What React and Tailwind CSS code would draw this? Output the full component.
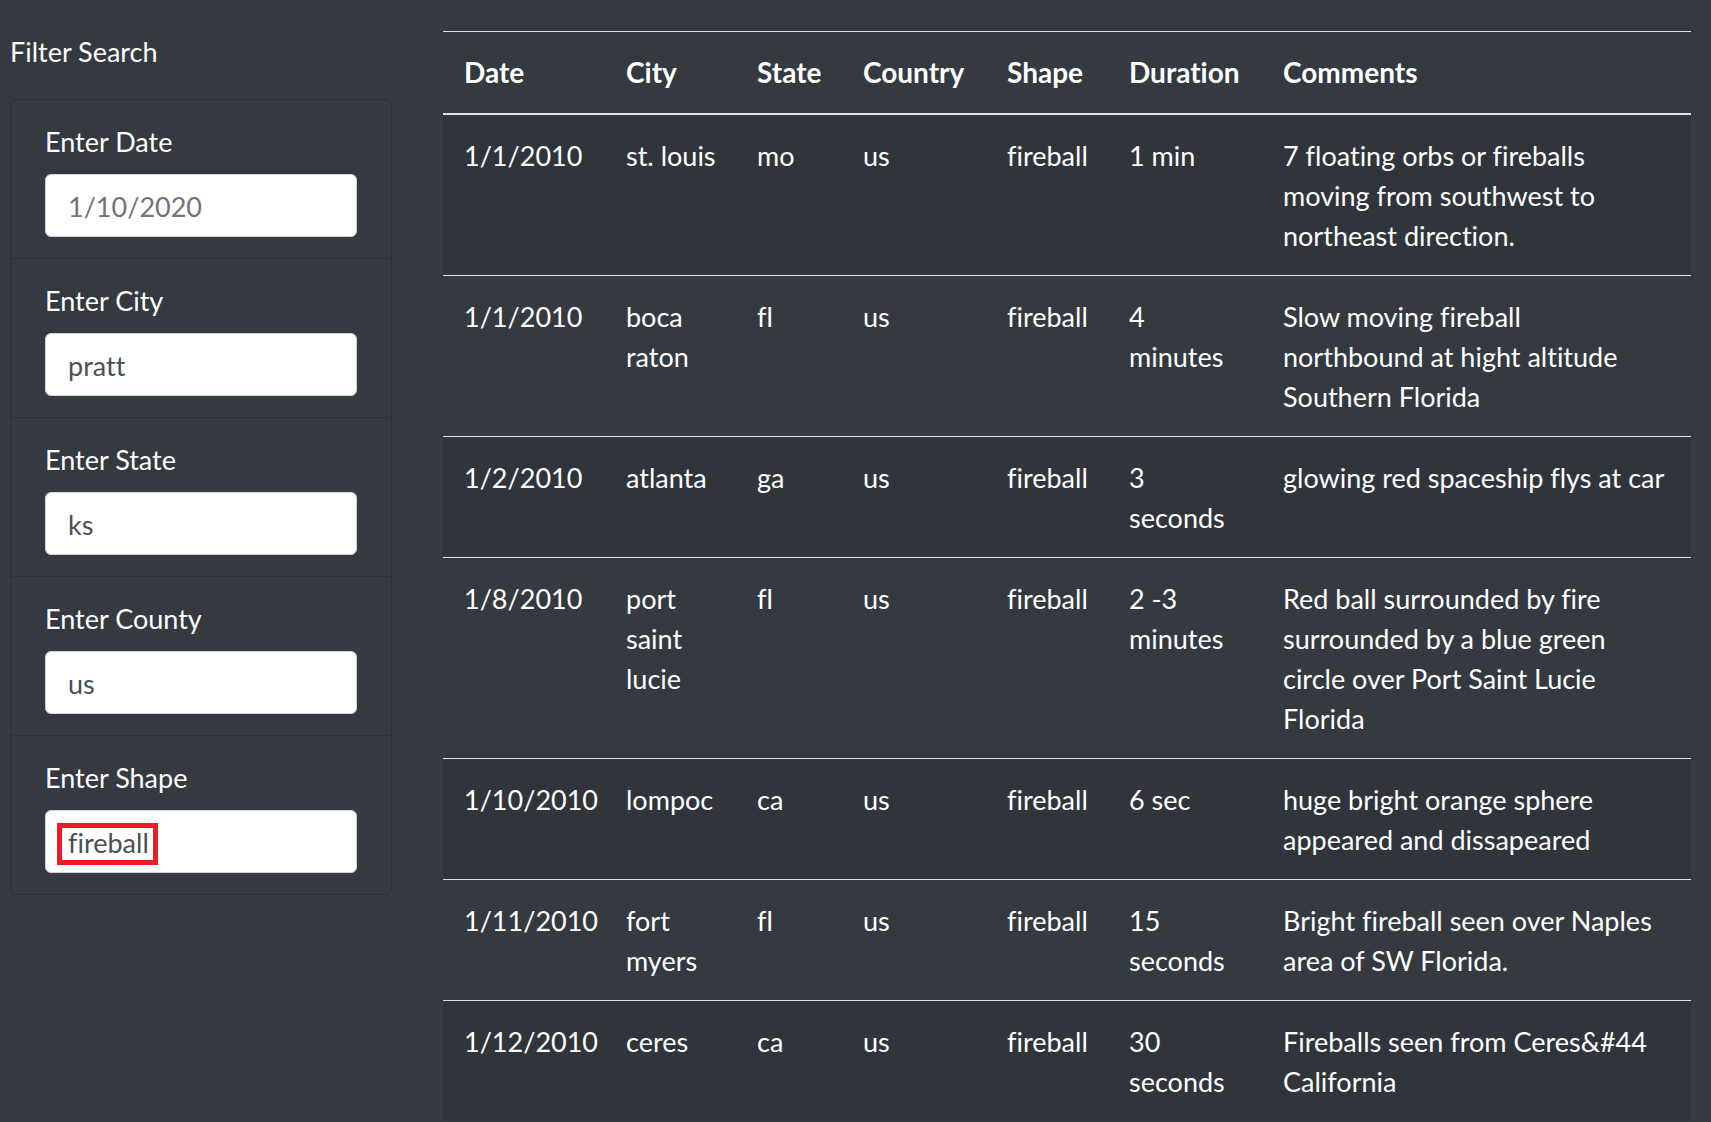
import React from "react";

const fields = [
  { label: "Enter Date", value: "1/10/2020", light: true },
  { label: "Enter City", value: "pratt" },
  { label: "Enter State", value: "ks" },
  { label: "Enter County", value: "us" },
  { label: "Enter Shape", value: "fireball", marked: true },
];

const cols = [
  { name: "Date", w: "w-[162px]" },
  { name: "City", w: "w-[131px]" },
  { name: "State", w: "w-[106px]" },
  { name: "Country", w: "w-[144px]" },
  { name: "Shape", w: "w-[122px]" },
  { name: "Duration", w: "w-[154px]" },
  { name: "Comments", w: "w-[429px]" },
];

const rows = [
  ["1/1/2010", ["st. louis"], ["mo"], ["us"], ["fireball"], ["1 min"], ["7 floating orbs or fireballs", "moving from southwest to", "northeast direction."]],
  ["1/1/2010", ["boca", "raton"], ["fl"], ["us"], ["fireball"], ["4", "minutes"], ["Slow moving fireball", "northbound at hight altitude", "Southern Florida"]],
  ["1/2/2010", ["atlanta"], ["ga"], ["us"], ["fireball"], ["3", "seconds"], ["glowing red spaceship flys at car"]],
  ["1/8/2010", ["port", "saint", "lucie"], ["fl"], ["us"], ["fireball"], ["2 -3", "minutes"], ["Red ball surrounded by fire", "surrounded by a blue green", "circle over Port Saint Lucie", "Florida"]],
  ["1/10/2010", ["lompoc"], ["ca"], ["us"], ["fireball"], ["6 sec"], ["huge bright orange sphere", "appeared and dissapeared"]],
  ["1/11/2010", ["fort", "myers"], ["fl"], ["us"], ["fireball"], ["15", "seconds"], ["Bright fireball seen over Naples", "area of SW Florida."]],
  ["1/12/2010", ["ceres"], ["ca"], ["us"], ["fireball"], ["30", "seconds"], ["Fireballs seen from Ceres&#44", "California"]],
];

function Lines({ lines }) {
  const arr = Array.isArray(lines) ? lines : [lines];
  return (
    <>
      {arr.map((l, i) => (
        <div key={i} className="whitespace-nowrap">
          {l}
        </div>
      ))}
    </>
  );
}

export default function App() {
  return (
    <div className="w-[1711px] h-[1122px] overflow-hidden bg-[#343a40] text-white font-[Lato,sans-serif] text-[27px] leading-[40px] [font-variant-ligatures:none] flex pl-[10px]">
      <aside className="w-[382px] shrink-0 pt-[32px]">
        <div>Filter Search</div>
        <div className="mt-[27px] border border-[#2c3035] rounded-[6px]">
          {fields.map((f, i) => (
            <div
              key={f.label}
              className={`px-[34px] pt-[22px] pb-[21px] ${i > 0 ? "border-t border-[#2c3035]" : ""}`}
            >
              <div className="mb-[12px]">{f.label}</div>
              <div className="relative">
                <input
                  readOnly
                  defaultValue={f.value}
                  className={`block w-[312px] h-[63px] bg-white border border-[#ced4da] rounded-[6px] px-[22px] pt-[2px] text-[27px] leading-[40px] [font-variant-ligatures:none] outline-none ${
                    f.light ? "text-[#6c757d]" : "text-[#495057]"
                  }`}
                />
                {f.marked && (
                  <div className="absolute left-[12px] top-[13px] w-[101px] h-[42px] border-[5px] border-[#ed1c24] pointer-events-none" />
                )}
              </div>
            </div>
          ))}
        </div>
      </aside>

      <main className="ml-[51px] w-[1248px] shrink-0 pt-[31px]">
        <table className="w-[1248px] border-collapse table-fixed">
          <thead>
            <tr className="border-t border-[#dee2e6] border-b-2 border-b-[#dee2e6]">
              {cols.map((c) => (
                <th
                  key={c.name}
                  className={`${c.w} text-left font-bold text-[28px] px-[21px] pt-[20px] pb-[21px] align-top`}
                >
                  {c.name}
                </th>
              ))}
            </tr>
          </thead>
          <tbody>
            {rows.map((r, ri) => (
              <tr
                key={ri}
                className={`${ri > 0 ? "border-t border-[#dee2e6]" : ""} ${
                  ri % 2 === 0 ? "bg-[#30353b]" : ""
                }`}
              >
                {r.map((cell, ci) => (
                  <td key={ci} className="px-[21px] pt-[21px] pb-[19px] align-top">
                    <Lines lines={cell} />
                  </td>
                ))}
              </tr>
            ))}
          </tbody>
        </table>
      </main>
    </div>
  );
}
